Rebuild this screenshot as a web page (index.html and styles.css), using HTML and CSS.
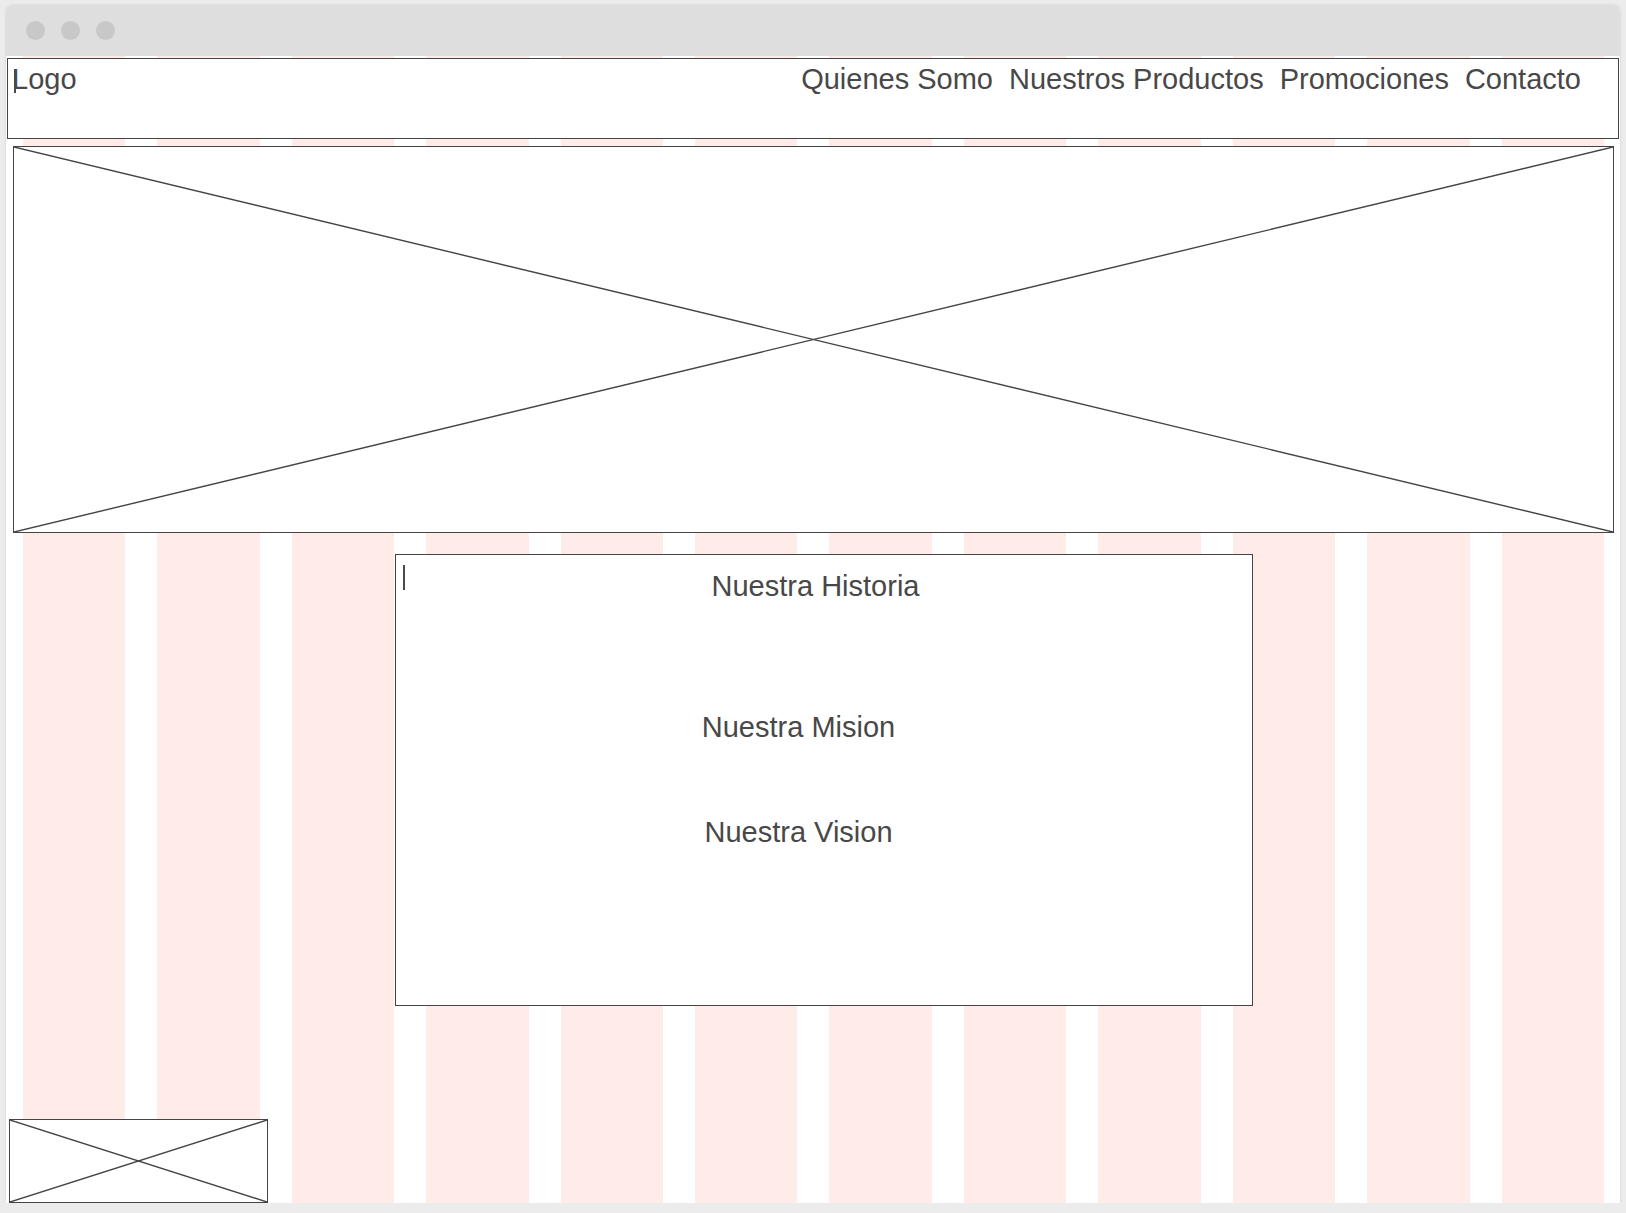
FILE: index.html
```html
<!DOCTYPE html>
<html lang="es">
<head>
    <meta charset="UTF-8">
    <meta name="viewport" content="width=device-width, initial-scale=1.0">
    <title>Wireframe - Inicio</title>
    <link rel="stylesheet" href="styles.css">
</head>
<body>
    <div class="window">
        <div class="titlebar">
            <span class="dot"></span>
            <span class="dot"></span>
            <span class="dot"></span>
        </div>
        <div class="canvas">
            <div class="grid-overlay">
                <span></span><span></span><span></span><span></span>
                <span></span><span></span><span></span><span></span>
                <span></span><span></span><span></span><span></span>
            </div>

            <div class="header">
                <span class="caret caret-logo"></span>
                <div class="logo">Logo</div>
                <nav class="nav">
                    <a href="#">Quienes Somo</a>
                    <a href="#">Nuestros Productos</a>
                    <a href="#">Promociones</a>
                    <a href="#">Contacto</a>
                </nav>
            </div>

            <div class="placeholder hero">
                <svg viewBox="0 0 100 100" preserveAspectRatio="none">
                    <line x1="0" y1="0" x2="100" y2="100"/>
                    <line x1="0" y1="100" x2="100" y2="0"/>
                </svg>
            </div>

            <div class="about">
                <span class="caret caret-about"></span>
                <h2 class="about-title">Nuestra Historia</h2>
                <h2 class="about-item mision">Nuestra Mision</h2>
                <h2 class="about-item vision">Nuestra Vision</h2>
            </div>

            <div class="placeholder thumb">
                <svg viewBox="0 0 100 100" preserveAspectRatio="none">
                    <line x1="0" y1="0" x2="100" y2="100"/>
                    <line x1="0" y1="100" x2="100" y2="0"/>
                </svg>
            </div>
        </div>
    </div>
</body>
</html>
```

FILE: styles.css
```css
* {
    padding: 0;
    margin: 0;
    box-sizing: border-box;
}

:root {
    --line-color: #444;
    --text-color: #484848;
    --grid-color: #ffebe8;
    --font-family: 'Liberation Sans', Arial, sans-serif;
}

body {
    font-family: var(--font-family);
    background-color: #ececec;
    color: var(--text-color);
    padding: 5px 6px 0;
}

.window {
    width: 1614px;
    height: 1198px;
    background-color: white;
    border-radius: 6px 6px 0 0;
    box-shadow: 0 0 3px rgba(0, 0, 0, 0.12);
    display: flex;
    flex-direction: column;
    overflow: hidden;
}

.titlebar {
    height: 51px;
    background-color: #dedede;
    display: flex;
    align-items: center;
    gap: 16px;
    padding-left: 20px;
    flex-shrink: 0;
}

.dot {
    width: 19px;
    height: 19px;
    border-radius: 50%;
    background-color: #c8c8c8;
}

.canvas {
    position: relative;
    flex: 1;
    display: flex;
    flex-direction: column;
    align-items: flex-start;
}

/* layout grid shown behind the wireframe */
.grid-overlay {
    position: absolute;
    top: 0;
    bottom: 0;
    left: 17px;
    right: 16px;
    display: grid;
    grid-template-columns: repeat(12, 1fr);
    gap: 32px;
    z-index: 0;
}

.grid-overlay span {
    background-color: var(--grid-color);
}

.header,
.placeholder,
.about {
    position: relative;
    z-index: 1;
    background-color: white;
    border: 1px solid var(--line-color);
}

.header {
    align-self: stretch;
    margin: 2px 1px 0;
    height: 81px;
    padding: 4px 37px 0 4px;
    display: flex;
    justify-content: space-between;
    align-items: flex-start;
    font-size: 29px;
    line-height: 1.15;
}

.nav {
    display: flex;
    gap: 16px;
}

.nav a {
    color: var(--text-color);
    text-decoration: none;
}

.caret {
    position: absolute;
    width: 2px;
    background-color: #4a4a4a;
}

.caret-logo {
    left: 6px;
    top: 10px;
    height: 24px;
}

.caret-about {
    left: 7px;
    top: 10px;
    height: 25px;
}

.placeholder svg {
    display: block;
    width: 100%;
    height: 100%;
}

.placeholder line {
    stroke: var(--line-color);
    stroke-width: 1.4px;
    vector-effect: non-scaling-stroke;
}

.hero {
    align-self: stretch;
    margin: 7px 6px 0 7px;
    height: 387px;
}

.about {
    margin: 21px 0 0 389px;
    width: 858px;
    height: 452px;
    padding-top: 15px;
    display: flex;
    flex-direction: column;
}

.about h2 {
    font-size: 29px;
    font-weight: normal;
    line-height: 1.15;
    text-align: center;
}

.about-title {
    padding-right: 17px;
}

.about-item {
    padding-right: 51px;
}

.mision {
    margin-top: 108px;
}

.vision {
    margin-top: 71px;
}

.thumb {
    margin: 113px 0 0 3px;
    width: 259px;
    height: 84px;
}
```
